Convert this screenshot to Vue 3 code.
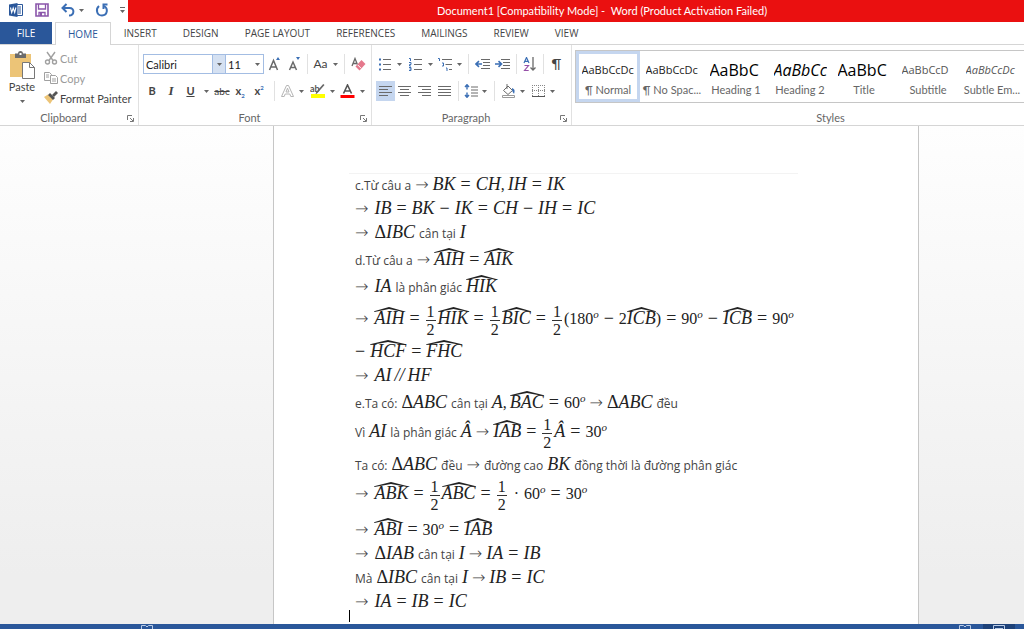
<template>
  <div class="word">
    <header class="titlebar">
      <div class="quick">
        <svg class="logo" width="14" height="14" viewBox="0 0 14 14">
          <path d="M7 1.5h6.5v11H7z" fill="#fff" stroke="#2a579a" />
          <path d="M9 4h3M9 6h3M9 8h3M9 10h3" stroke="#2a579a" />
          <path d="M0 1.5L8.500 0v14L0 12.500z" fill="#2a579a" />
          <path d="M1.500 4.500l1.200 5L4.200 5l1.500 4.500 1.200-5" fill="none" stroke="#fff" stroke-width="1.100" />
        </svg>
        <button class="quick-btn save" aria-label="Save">
          <svg width="14" height="14" viewBox="0 0 14 14">
            <path d="M1 1h12v12H1z" fill="none" stroke="#8a55ab" stroke-width="1.600" />
            <path d="M3.500 1v5h7V1M4 13V9.500h6V13" fill="none" stroke="#8a55ab" stroke-width="1.300" />
            <path d="M5 10h2v3H5z" fill="#8a55ab" />
          </svg>
        </button>
        <button class="quick-btn undo" aria-label="Undo">
          <svg width="14" height="14" viewBox="0 0 14 14">
            <path d="M2 5h6.500c5.500 0 5 7.500-.5 7.500" fill="none" stroke="#3b6fb5" stroke-width="2" />
            <path d="M5.500 1L1.500 5l4 4" fill="none" stroke="#3b6fb5" stroke-width="2" />
          </svg>
        </button>
        <svg class="arrow" width="5" height="3" viewBox="0 0 5 3"><path d="M0 0h5L2.500 3z" /></svg>
        <button class="quick-btn redo" aria-label="Repeat">
          <svg width="14" height="14" viewBox="0 0 14 14">
            <path d="M4 3C.5 6 1.500 12.500 7 12.500S13.500 5.500 9 3" fill="none" stroke="#3b6fb5" stroke-width="2" />
            <path d="M12.500 1.500H8.500v4.500" fill="none" stroke="#3b6fb5" stroke-width="2" />
          </svg>
        </button>
        <svg class="arrow" width="5" height="6" viewBox="0 0 5 6"><path d="M0 0h5v1H0zM0 3h5L2.500 6z" /></svg>
      </div>
      <div class="title">Document1 [Compatibility Mode] -&nbsp; Word (Product Activation Failed)</div>
    </header>

    <nav class="tabs">
      <button class="tab file">FILE</button>
      <button v-for="tab in tabs" :key="tab" :class="['tab', { active: tab === activeTab }]" @click="activeTab = tab">{{ tab }}</button>
    </nav>

    <section class="ribbon">
      <div class="group clipboard">
        <div class="group-body">
          <button class="paste">
            <svg width="27" height="28" viewBox="0 0 27 28">
              <path d="M1 3h21v23H1z" fill="#ecc477" />
              <path d="M6 2.500h3c0-3.300 5-3.300 5 0h3V7H6z" fill="#6b6b6b" />
              <path d="M10.500 2h2v2h-2z" fill="#fff" />
              <path d="M13.500 11.500h7l5 5v11h-12z" fill="#fff" stroke="#777" />
              <path d="M20.500 11.500v5h5" fill="none" stroke="#777" />
            </svg>
            <span>Paste</span>
            <svg class="arrow" width="5" height="3" viewBox="0 0 5 3"><path d="M0 0h5L2.500 3z" /></svg>
          </button>
          <div class="clip-list">
            <button class="clip muted">
              <svg width="14" height="14" viewBox="0 0 14 14" fill="none" stroke="#a0a0a0" stroke-width="1.400">
                <path d="M3 1l6 8.500M11 1L5 9.500" /><circle cx="3.500" cy="11" r="2" /><circle cx="10.500" cy="11" r="2" />
              </svg>
              Cut
            </button>
            <button class="clip muted">
              <svg width="14" height="14" viewBox="0 0 14 14" fill="#fff" stroke="#a0a0a0">
                <path d="M.5 1.500h5l2 2v6h-7z" /><path d="M6.500 4.500h5l2 2v6h-7z" />
                <path d="M2 4h3M2 6h3M8 8h4M8 10h4" />
              </svg>
              Copy
            </button>
            <button class="clip">
              <svg width="14" height="14" viewBox="0 0 14 14">
                <path d="M0 6l4-2.500 5 5L6 13z" fill="#ecc477" />
                <path d="M4 4l2-2 5 5-2 2z" fill="#555" />
                <path d="M8 4l4-4 2 2-4 4z" fill="#555" />
              </svg>
              Format Painter
            </button>
          </div>
        </div>
        <footer class="group-foot"><span>Clipboard</span><button class="launcher" aria-label="Clipboard options"><svg width="7" height="7" viewBox="0 0 7 7"><path d="M.5 5V.5H5M3 3l3 3M6.500 3v3.500H3" /></svg></button></footer>
      </div>

      <div v-for="group in groups" :key="group.name" :class="['group', group.cls]">
        <div class="group-body rows">
          <div v-for="(row, r) in group.rows" :key="r" class="row">
            <template v-if="group.cls === 'font' && r === 0">
              <label class="combo name">
                <select aria-label="Font"><option>Calibri</option></select>
                <span class="drop"><svg class="arrow" width="5" height="3" viewBox="0 0 5 3"><path d="M0 0h5L2.500 3z" /></svg></span>
              </label>
              <label class="combo size">
                <select aria-label="Font size"><option>11</option></select>
                <span class="drop"><svg class="arrow" width="5" height="3" viewBox="0 0 5 3"><path d="M0 0h5L2.500 3z" /></svg></span>
              </label>
            </template>
            <template v-for="([name, w], i) in row" :key="i">
              <span v-if="name === 'sep'" class="sep" :style="{ width: w + 'px' }"></span>
              <button v-else :class="['tool', name]" :style="{ width: w + 'px' }" :aria-label="name">
                <span v-if="glyphs[name]" v-html="glyphs[name]"></span>
                <svg v-else-if="name === 'more'" class="arrow" width="5" height="3" viewBox="0 0 5 3"><path d="M0 0h5L2.500 3z" /></svg>
                <svg v-else width="15" height="14" viewBox="0 0 15 14" v-html="icons[name]"></svg>
              </button>
            </template>
          </div>
        </div>
        <footer class="group-foot"><span>{{ group.name }}</span><button class="launcher" :aria-label="group.name + ' options'"><svg width="7" height="7" viewBox="0 0 7 7"><path d="M.5 5V.5H5M3 3l3 3M6.500 3v3.500H3" /></svg></button></footer>
      </div>

      <div class="group styles">
        <div class="gallery">
          <button v-for="(s, i) in styles" :key="s.name" :class="['style', s.cls, { selected: i === 0 }]">
            <span class="sample">{{ s.sample }}</span>
            <span class="style-name">{{ s.name }}</span>
          </button>
        </div>
        <footer class="group-foot"><span>Styles</span></footer>
      </div>
    </section>

    <main class="canvas">
      <article class="page">
        <div class="content">
          <p v-for="(line, n) in lines" :key="n" :class="['line', line.kind]">
            <template v-for="([type, value], k) in line.parts" :key="k">
              <span v-if="type === 'hat'" class="math hat">{{ value }}<svg viewBox="0 0 30 5" preserveAspectRatio="none"><path d="M0 4.200L15 0l15 4.200-.5.700L15 1.900.500 4.900z" /></svg></span>
              <span v-else-if="type === 'frac'" class="frac"><span>1</span><span>2</span></span>
              <span v-else-if="type === 'deg'" class="num">{{ value }}<sup>o</sup></span>
              <span v-else :class="type">{{ value }}</span>
            </template>
          </p>
          <span class="caret"></span>
        </div>
      </article>
    </main>

    <footer class="status">
      <svg class="proof" width="12" height="5" viewBox="0 0 12 5"><path d="M.5 5V1.500h4L6 3l1.500-1.500h4V5" /></svg>
      <svg class="read" width="12" height="5" viewBox="0 0 12 5"><path d="M.5 5V1.500h4L6 3l1.500-1.500h4V5" /></svg>
      <span class="view"><svg width="12" height="5" viewBox="0 0 12 5"><path d="M.5 5V1.500h11V5M2 4.500h8" /></svg></span>
    </footer>
  </div>
</template>

<script setup>
import { ref } from 'vue'

const tabs = ['HOME', 'INSERT', 'DESIGN', 'PAGE LAYOUT', 'REFERENCES', 'MAILINGS', 'REVIEW', 'VIEW']
const activeTab = ref('HOME')

// [tool, slot width]
const groups = [
  {
    name: 'Font',
    cls: 'font',
    rows: [
      [['grow', 18], ['shrink', 20], ['sep', 6], ['case', 21], ['more', 8], ['sep', 10], ['clear', 19]],
      [['bold', 18], ['italic', 20], ['underline', 19], ['more', 12], ['strike', 20], ['sub', 16], ['super', 22], ['sep', 8], ['effects', 19], ['more', 8], ['highlight', 24], ['more', 7], ['color', 22], ['more', 8]]
    ]
  },
  {
    name: 'Paragraph',
    cls: 'paragraph',
    rows: [
      [['bullets', 18], ['more', 11], ['numbers', 20], ['more', 10], ['multi', 20], ['more', 8], ['sep', 10], ['dedent', 19], ['indent', 20], ['sep', 8], ['sort', 19], ['sep', 9], ['pilcrow', 17]],
      [['left', 19], ['center', 19], ['right', 20], ['justify', 20], ['sep', 8], ['spacing', 18], ['more', 9], ['sep', 11], ['shading', 17], ['more', 11], ['borders', 20], ['more', 8]]
    ]
  }
]

const glyphs = {
  case: 'Aa',
  bold: 'B',
  italic: 'I',
  underline: 'U',
  strike: 'abc',
  sub: 'x<sub>2</sub>',
  super: 'x<sup>2</sup>',
  pilcrow: '¶'
}

const gray = 'fill="none" stroke="#6a6a6a"'
const blue = 'fill="none" stroke="#3b6fb5"'

const icons = {
  grow: `<path d="M1.500 13L5.500 3.500 9.500 13M3 10h5" ${gray} stroke-width="1.500"/><path d="M8 3l2-3 2 3z" fill="#3b6fb5"/>`,
  shrink: `<path d="M2.500 13L6 5l3.500 8M4 10.500h4" ${gray} stroke-width="1.500"/><path d="M9 0h4l-2 3z" fill="#3b6fb5"/>`,
  clear: `<path d="M1 9L4 1.500 7 9M2 6.500h4" ${gray} stroke-width="1.300"/><path d="M4.500 9.500L10.500 3l4 4L8.500 13.500z" fill="#e5788c"/><path d="M6.500 7.700l3.500 3.500" stroke="#fff"/>`,
  effects: '<path d="M1.500 12.500L6.500 1.500h2l5 11h-2.700l-1-2.500H5.200l-1 2.500zM6 8h3L7.500 4.200z" fill="#fff" stroke="#b5b5b5"/>',
  highlight: '<text x="0" y="8" font-size="9" font-weight="bold" fill="#555">ab</text><path d="M14.500 1L7.500 9l-2 1.500.7-2.500 7-8z" fill="#666"/><path d="M1 10h14v4H1z" fill="#ffff00"/>',
  color: '<path d="M3.500 9.500L7.500 1l4 8.500M5 7h5" fill="none" stroke="#555" stroke-width="1.600"/><path d="M.5 11h14v3H.5z" fill="#f00"/>',
  bullets: `<path d="M5 2.500h8M5 7.500h8M5 12.500h8" ${gray}/><path d="M1 1.500h2v2H1zM1 6.500h2v2H1zM1 11.500h2v2H1z" fill="#3b6fb5"/>`,
  numbers: `<path d="M6 2.500h8M6 7.500h8M6 12.500h8" ${gray}/><path d="M1 1.500h1.500V4M1 5.500h2v2H1.500v1.500H3M1 10.500h2v3H1M1.500 12H3" ${blue}/>`,
  multi: `<path d="M4 2.500h10M7.500 7.500H14M11 12.500h3" ${gray}/><path d="M0 1.500h1.500V4M4 6h1.500v3H4M8 11h1v3" ${blue}/>`,
  dedent: `<path d="M6 2.500h9M8 5.500h7M8 8.500h7M6 11.500h9" ${gray}/><path d="M7 7H1.500M4 4.200L1 7l3 2.800" ${blue} stroke-width="1.600"/>`,
  indent: `<path d="M6 2.500h9M8 5.500h7M8 8.500h7M6 11.500h9" ${gray}/><path d="M0 7h5.500M3.500 4.200L6.500 7l-3 2.800" ${blue} stroke-width="1.600"/>`,
  sort: `<path d="M2 6l2.500-5.500L7 6M3 4.300h3" ${blue} stroke-width="1.200"/><path d="M2.500 8.500h4l-4 5h4.200" fill="none" stroke="#9650a8" stroke-width="1.200"/><path d="M11 0v13M8.500 10.500L11 13l2.500-2.500" ${gray} stroke-width="1.300"/>`,
  left: `<path d="M1 2.500h13M1 5.500h9M1 8.500h13M1 11.500h9" ${gray}/>`,
  center: `<path d="M1 2.500h13M3 5.500h9M1 8.500h13M3 11.500h9" ${gray}/>`,
  right: `<path d="M1 2.500h13M5 5.500h9M1 8.500h13M5 11.500h9" ${gray}/>`,
  justify: `<path d="M1 2.500h13M1 5.500h13M1 8.500h13M1 11.500h13" ${gray}/>`,
  spacing: `<path d="M7 3h7M7 6h7M7 9h7M7 12h7" ${gray}/><path d="M3 1v4.500M3 8.500V13M1 3l2-2.300L5 3M1 11l2 2.300L5 11" ${blue} stroke-width="1.400"/>`,
  shading: `<path d="M2.500 6.500L7 2l4.500 4.500L7 10.500zM6 0v5" ${gray}/><path d="M11 4c3 1 3 3 2 6-1-2-2-2-2-6z" fill="#3b6fb5"/><path d="M1.500 11.500h12v2h-12z" fill="#fff" stroke="#999"/>`,
  borders: '<path d="M1.500 1v11M7.500 1v11M13.500 1v11M1 1.500h13M1 6.500h13" fill="none" stroke="#888" stroke-dasharray="1 1"/><path d="M1 12.500h13" stroke="#555"/>'
}

const styles = [
  { name: '¶ Normal', sample: 'AaBbCcDc', cls: 'plain' },
  { name: '¶ No Spac...', sample: 'AaBbCcDc', cls: 'plain' },
  { name: 'Heading 1', sample: 'AaBbC', cls: 'big' },
  { name: 'Heading 2', sample: 'AaBbCc', cls: 'big slanted' },
  { name: 'Title', sample: 'AaBbC', cls: 'big' },
  { name: 'Subtitle', sample: 'AaBbCcD', cls: 'soft' },
  { name: 'Subtle Em...', sample: 'AaBbCcDc', cls: 'soft slanted' }
]

const text = v => ['text', v]
const m = v => ['math', v]
const hat = v => ['hat', v]
const num = v => ['num', v]
const deg = v => ['deg', v]
const delta = ['delta', 'Δ']
const to = ['arr', '→']
const eq = ['op', '=']
const minus = ['op', '−']
const half = ['frac', '']

const lines = [
  { parts: [text('c.Từ câu a'), to, m('BK'), eq, m('CH'), ['comma', ','], m('IH'), eq, m('IK')] },
  { parts: [to, m('IB'), eq, m('BK'), minus, m('IK'), eq, m('CH'), minus, m('IH'), eq, m('IC')] },
  { parts: [to, delta, m('IBC'), text('cân tại'), m('I')] },
  { kind: 'tall', parts: [text('d.Từ câu a'), to, hat('AIH'), eq, hat('AIK')] },
  { kind: 'tall', parts: [to, m('IA'), text('là phân giác'), hat('HIK')] },
  { kind: 'after', parts: [to, hat('AIH'), eq, half, hat('HIK'), eq, half, hat('BIC'), eq, half, num('('), deg('180'), minus, num('2'), hat('ICB'), num(')'), eq, deg('90'), minus, hat('ICB'), eq, deg('90')] },
  { kind: 'tall', parts: [['op lead', '−'], hat('HCF'), eq, hat('FHC')] },
  { parts: [to, m('AI'), ['math slashes', '//'], m('HF')] },
  { kind: 'tall', parts: [text('e.Ta có:'), delta, m('ABC'), text('cân tại'), m('A'), ['comma', ','], hat('BAC'), eq, deg('60'), to, delta, m('ABC'), text('đều')] },
  { parts: [text('Vì'), m('AI'), text('là phân giác'), m('Â'), to, hat('IAB'), eq, half, m('Â'), eq, deg('30')] },
  { kind: 'after', parts: [text('Ta có:'), delta, m('ABC'), text('đều'), to, text('đường cao'), m('BK'), text('đồng thời là đường phân giác')] },
  { parts: [to, hat('ABK'), eq, half, hat('ABC'), eq, half, ['dot', '·'], deg('60'), eq, deg('30')] },
  { kind: 'tall after', parts: [to, hat('ABI'), eq, deg('30'), eq, hat('IAB')] },
  { parts: [to, delta, m('IAB'), text('cân tại'), m('I'), to, m('IA'), eq, m('IB')] },
  { parts: [text('Mà'), delta, m('IBC'), text('cân tại'), m('I'), to, m('IB'), eq, m('IC')] },
  { parts: [to, m('IA'), eq, m('IB'), eq, m('IC')] }
]
</script>

<style>
body {
  background: #fff;
  overflow: hidden;
}
</style>

<style scoped>
.word {
  display: flex;
  flex-direction: column;
  height: 100vh;
  overflow: hidden;
  font-family: Lato, "Open Sans", sans-serif;
  font-size: 11px;
  color: #444;
}

button {
  padding: 0;
  border: none;
  background: none;
  font: inherit;
  color: inherit;
}

svg {
  display: block;
  flex: none;
}

.arrow {
  fill: #666;
}

.titlebar {
  display: flex;
  flex: none;
  height: 22px;
}

.quick {
  display: flex;
  flex: none;
  align-items: center;
  width: 128px;
  height: 20px;
  box-sizing: border-box;
  padding-left: 9px;
}

.save { margin-left: 12px; }
.undo { margin: 0 4px 0 12px; }
.redo { margin: 0 11px; }

.title {
  flex: 1;
  padding-left: 52px;
  background: #ea1010;
  color: #fff;
  text-align: center;
  line-height: 22px;
}

.tabs {
  display: flex;
  flex: none;
  height: 22px;
  border-bottom: 1px solid #d5d5d5;
  font-family: "Open Sans", sans-serif;
  font-size: 10px;
}

.tab {
  padding: 0 13px;
  line-height: 22px;
}

.tab.file {
  width: 52px;
  margin-right: 3px;
  background: #2a579a;
  color: #fff;
}

.tab.active {
  height: 23px;
  padding: 0 12px;
  border: 1px solid #d5d5d5;
  border-bottom: none;
  background: #fff;
  color: #2a579a;
}

.ribbon {
  display: flex;
  flex: none;
  height: 80px;
  border-bottom: 1px solid #d5d5d5;
  background: #fff;
}

.group {
  display: flex;
  flex: none;
  flex-direction: column;
  justify-content: space-between;
  box-sizing: border-box;
}

.group:not(.styles) {
  border-right: 1px solid #e1e1e1;
}

.clipboard { width: 139px; }
.font { width: 233px; }
.paragraph { width: 200px; }
.styles { flex: 1; min-width: 0; }

.group-body {
  display: flex;
}

.group-foot {
  display: flex;
  align-items: center;
  padding-right: 4px;
  line-height: 14px;
  color: #666;
}

.group-foot span {
  flex: 1;
  text-align: center;
}

.launcher svg {
  fill: none;
  stroke: #777;
}

.paste {
  display: flex;
  flex-direction: column;
  align-items: center;
  width: 44px;
  padding-top: 6px;
  line-height: 16px;
}

.paste .arrow {
  margin-top: 5px;
}

.clip-list {
  display: flex;
  flex-direction: column;
  padding-top: 3px;
}

.clip {
  display: flex;
  align-items: center;
  gap: 2px;
  height: 20px;
  white-space: nowrap;
}

.muted {
  color: #9a9a9a;
}

.rows {
  flex-direction: column;
  gap: 7px;
  padding: 9px 0 0 4px;
}

.row {
  display: flex;
  height: 20px;
}

.combo {
  display: flex;
  box-sizing: border-box;
  border: 1px solid #a3bde3;
}

.combo.name { width: 83px; }
.combo.size { width: 38px; margin-right: 2px; border-left: none; }

.combo select {
  flex: 1;
  min-width: 0;
  padding: 0 2px;
  border: none;
  background: #fff;
  appearance: none;
  font: inherit;
  color: #222;
}

.drop {
  display: flex;
  align-items: center;
  justify-content: center;
  width: 12px;
}

.name .drop {
  border-left: 1px solid #a3bde3;
  background: #d5e1f2;
}

.tool {
  display: flex;
  flex: none;
  align-items: center;
  justify-content: center;
  line-height: 20px;
}

.tool.left { background: #c5d6ef; }
.tool.bold, .tool.underline, .tool.sub, .tool.super { font-weight: bold; }
.tool.italic { font: italic bold 13px "Liberation Serif", serif; }
.tool.underline { text-decoration: underline; }
.tool.strike { font-size: 10px; text-decoration: line-through; }
.tool.case { font-size: 12px; }
.tool.pilcrow { font-size: 14px; }

.tool :deep(sub), .tool :deep(sup) {
  font-size: 6px;
  line-height: 0;
  color: #3b6fb5;
}

.sep {
  flex: none;
  background: linear-gradient(#e1e1e1, #e1e1e1) center / 1px 100% no-repeat;
}

.gallery {
  display: flex;
  height: 53px;
  box-sizing: border-box;
  margin: 5px 0 0 3px;
  border: 1px solid #c6c6c6;
  border-right: none;
  overflow: hidden;
}

.style {
  display: flex;
  flex: none;
  flex-direction: column;
  justify-content: space-between;
  align-items: center;
  width: 64px;
  box-sizing: border-box;
  border: 3px solid transparent;
  padding: 5px 0 0;
}

.style.selected {
  border-color: #c5d6ef;
}

.sample {
  width: 53px;
  overflow: hidden;
  font-family: "Open Sans", sans-serif;
  line-height: 22px;
  text-align: left;
  white-space: nowrap;
  color: #222;
}

.big .sample { font-size: 16px; color: #000; }
.slanted .sample { font-style: italic; }
.soft .sample { color: #555; }

.style-name {
  line-height: 18px;
  white-space: nowrap;
  color: #666;
}

.styles .group-foot {
  padding: 0 0 0 65px;
}

.canvas {
  display: flex;
  flex: 1;
  min-height: 0;
  padding: 0 105px 0 273px;
  background: linear-gradient(#fefefe, #eee 90%);
  overflow: hidden;
}

.page {
  flex: 1;
  padding: 47px 120px 0 75px;
  border: solid #c6c6c6;
  border-width: 0 1px;
  background: #fff;
}

.content {
  border-top: 1px solid #f3f3f3;
}

.line {
  margin: 0;
  padding-left: 6px;
  font-family: "Open Sans", sans-serif;
  font-size: 12px;
  line-height: 24px;
  white-space: nowrap;
}

.line.tall { padding-top: 3px; }
.line.after { margin-top: 3px; }

.math, .num, .frac, .comma, .op, .arr, .delta, .dot {
  font-family: "Liberation Serif", serif;
  font-size: 16px;
  line-height: 16px;
  color: #222;
}

.math {
  font-size: 18px;
  font-style: italic;
}

.text + .math, .text + .delta, .text + .hat { margin-left: 4px; }
.math + .text { margin-left: 4px; }

.delta, .op { font-size: 18px; }
.comma { margin-right: 3px; }
.slashes { margin: 0 3px; }
.op, .dot { margin: 0 5px; }
.op.lead { margin-left: 0; }

.arr {
  margin: 0 4px;
  font-family: "DejaVu Sans", sans-serif;
  font-weight: 200;
  color: #444;
}

.arr:first-child { margin: 0 6px 0 0; }

.hat {
  display: inline-block;
  position: relative;
}

.hat svg {
  position: absolute;
  top: -3px;
  left: 0;
  width: 100%;
  height: 5px;
  fill: #222;
}

.num sup {
  font-size: 11px;
  font-style: italic;
  line-height: 0;
}

.frac {
  display: inline-flex;
  flex-direction: column;
  vertical-align: middle;
  margin: 0 2px 0 1px;
  line-height: 17px;
}

.frac span {
  padding: 0 1px;
}

.frac span:first-child {
  border-bottom: 1px solid #333;
}

.caret {
  display: block;
  width: 1px;
  height: 12px;
  margin-top: -5px;
  background: #000;
}

.status {
  display: flex;
  flex: none;
  height: 5px;
  overflow: hidden;
  background: #2a579a;
}

.status path {
  fill: none;
  stroke: #b9cbe6;
}

.proof { margin-left: 141px; }
.read { margin-left: auto; }

.view {
  display: flex;
  justify-content: center;
  width: 32px;
  margin: 0 9px 0 12px;
  background: #1e4279;
}
</style>
